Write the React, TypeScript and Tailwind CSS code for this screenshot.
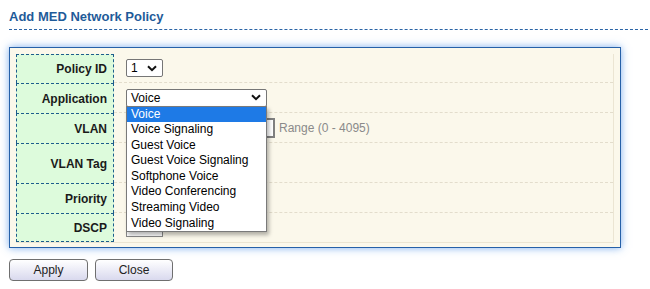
import React from 'react';

const Chevron = () => (
  <svg width="10" height="7" viewBox="0 0 10 7" className="shrink-0">
    <path d="M1 1.2 L5 5.2 L9 1.2" fill="none" stroke="#111" strokeWidth="2" />
  </svg>
);

const options = [
  'Voice',
  'Voice Signaling',
  'Guest Voice',
  'Guest Voice Signaling',
  'Softphone Voice',
  'Video Conferencing',
  'Streaming Video',
  'Video Signaling',
];

const rows = [
  { label: 'Policy ID', h: 'h-[29px]' },
  { label: 'Application', h: 'h-[30px]' },
  { label: 'VLAN', h: 'h-[30px]' },
  { label: 'VLAN Tag', h: 'h-[40px]' },
  { label: 'Priority', h: 'h-[30px]' },
  { label: 'DSCP', h: 'h-[29px]' },
];

function Field({ index }: { index: number }) {
  if (index === 0) {
    return (
      <div className="w-[37px] h-[18px] bg-white border border-[#767676] rounded-[2px] flex items-center justify-between pl-[4px] pr-[5px] text-[12px] text-black">
        <span>1</span>
        <Chevron />
      </div>
    );
  }
  if (index === 1) {
    return (
      <div className="relative">
        <div className="w-[141px] h-[18px] bg-white border border-[#767676] rounded-[2px] flex items-center justify-between pl-[4px] pr-[5px] text-[12px] text-black">
          <span>Voice</span>
          <Chevron />
        </div>
        <div className="absolute left-0 top-[17px] z-10 w-[141px] bg-white border border-[#7a7a7a] shadow-[2px_3px_4px_rgba(0,0,0,0.3)]">
          {options.map((o, i) => (
            <div
              key={o}
              className={
                'h-[15.6px] leading-[15.6px] pl-[4px] text-[12px] whitespace-nowrap ' +
                (i === 0 ? 'bg-[#1e7ae6] text-white' : 'text-black')
              }
            >
              {o}
            </div>
          ))}
        </div>
      </div>
    );
  }
  if (index === 2) {
    return (
      <div className="flex items-center gap-[4px]">
        <div className="w-[149px] h-[20px] bg-white border-2 border-[#808080]" />
        <span className="text-[12px] text-[#8a8a8a]">Range (0 - 4095)</span>
      </div>
    );
  }
  if (index === 4 || index === 5) {
    return <div className="w-[37px] h-[19px] bg-white border border-[#8a8a8a]" />;
  }
  return null;
}

export default function App() {
  return (
    <div className="w-[650px] h-[289px] bg-white font-['Liberation_Sans',Arial,sans-serif] overflow-hidden">
      <div className="ml-[9px] mr-[2px] pt-[9px] pb-[4px] border-b border-dashed border-[#2a64a6]">
        <h1 className="text-[13px] leading-[16px] font-bold text-[#1f5b99]">Add MED Network Policy</h1>
      </div>

      <div className="ml-[9px] mt-[17px] w-[612px] border border-[#2560a8] bg-[#fbf8eb] shadow-[0_0_8px_rgba(70,140,230,0.7)] pt-[6px] pb-[4px] px-[6px]">
        <div className="border-r border-b border-[#ebe5d3]">
          {rows.map((r, i) => (
            <div key={r.label} className={'flex ' + r.h}>
              <div
                className={
                  'w-[98px] shrink-0 bg-[#ddfbdc] border-l border-r border-t border-dashed border-[#1c5d8c] flex items-center justify-end pr-[6px] text-[12px] font-bold text-[#1a1a1a] ' +
                  (i === rows.length - 1 ? 'border-b' : '')
                }
              >
                {r.label}
              </div>
              <div
                className={
                  'flex-1 flex items-center pl-[12px] ' +
                  (i < rows.length - 1 ? 'border-b border-dashed border-[#e3ddcc]' : '')
                }
              >
                <Field index={i} />
              </div>
            </div>
          ))}
        </div>
      </div>

      <div className="ml-[9px] mt-[11px] flex gap-[7px]">
        <button className="w-[79px] h-[22px] rounded-[4px] border border-[#6f6f6f] bg-gradient-to-b from-white to-[#d9d9ee] text-[12px] text-[#222]">
          Apply
        </button>
        <button className="w-[78px] h-[22px] rounded-[4px] border border-[#6f6f6f] bg-gradient-to-b from-white to-[#d9d9ee] text-[12px] text-[#222]">
          Close
        </button>
      </div>
    </div>
  );
}
